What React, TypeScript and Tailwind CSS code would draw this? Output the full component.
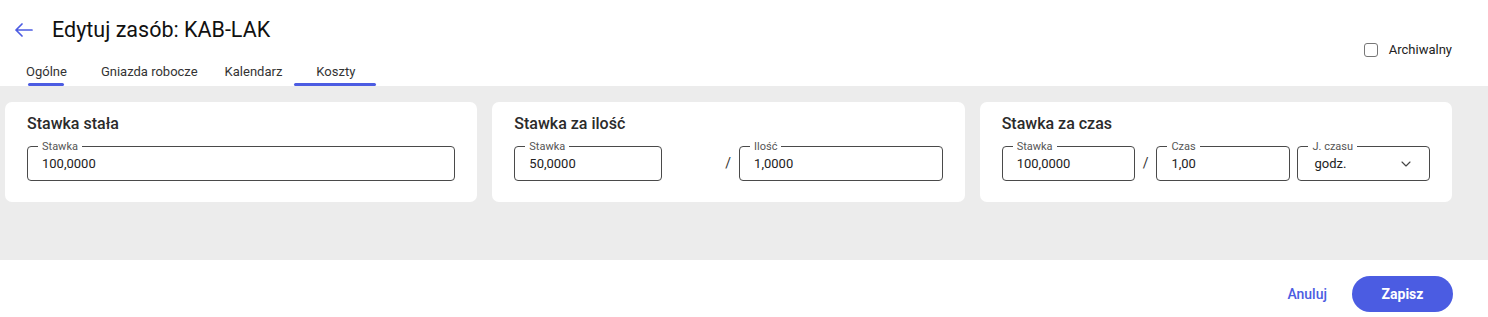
import { ChevronDown } from 'lucide-react';

const font = { fontFamily: 'Roboto, "Noto Sans", sans-serif' };

function Field({ label, value, className = '', select = false }: { label: string; value: string; className?: string; select?: boolean }) {
  return (
    <div className={`relative h-[35px] rounded-[4px] border border-[#4a4a4a] flex items-center ${select ? 'pl-[16px] pr-[15px]' : 'pl-[14px]'} ${className}`}>
      <span className="absolute -top-[7px] left-[10px] bg-white px-[4px] text-[11px] leading-[13px] text-[#555]">{label}</span>
      <span className="flex-1 text-[13px] text-[#222]">{value}</span>
      {select && <ChevronDown className="w-[16px] h-[16px] text-[#444]" strokeWidth={1.7} />}
    </div>
  );
}

function Card({ title, children }: { title: string; children: React.ReactNode }) {
  return (
    <div className="bg-white rounded-[7px] pt-[10px] px-[22px] pb-[21px]">
      <div className="text-[16px] leading-[24px] font-medium text-[#2b2b2b]">{title}</div>
      <div className="mt-[10px] flex items-center">{children}</div>
    </div>
  );
}

export default function App() {
  return (
    <div className="w-[1488px] h-[317px] bg-white flex flex-col" style={font}>
      <div className="h-[86px] flex justify-between">
        <div className="flex flex-col">
          <div className="mt-[14px] h-[32px] flex items-center pl-[15px]">
            <svg width="18" height="14" viewBox="0 0 18 14" fill="none" stroke="#4c5ce2" strokeWidth="1.7" strokeLinecap="round" strokeLinejoin="round">
              <path d="M7 1 L1 7 L7 13 M1 7 H17" />
            </svg>
            <h1 className="ml-[19px] text-[21.5px] text-[#111]">Edytuj zasób: KAB-LAK</h1>
          </div>
          <div className="mt-auto flex pl-[26px] text-[13px] leading-[16px] text-[#333]">
            <div className="relative pb-[6px]">
              Ogólne
              <span className="absolute bottom-0 left-[2px] right-[3px] h-[3px] rounded-full bg-[#4c5ce2]" />
            </div>
            <div className="ml-[34px] pb-[6px]">Gniazda robocze</div>
            <div className="ml-[27px] pb-[6px]">Kalendarz</div>
            <div className="relative ml-[34px] pb-[6px]">
              Koszty
              <span className="absolute bottom-0 -left-[22px] -right-[21px] h-[3px] rounded-full bg-[#4c5ce2]" />
            </div>
          </div>
        </div>
        <div className="pt-[43px] pr-[36px] flex items-start gap-[11px]">
          <span className="w-[14px] h-[14px] rounded-[3px] border-[1.5px] border-[#777] bg-white" />
          <span className="text-[13px] leading-[14px] text-[#222]">Archiwalny</span>
        </div>
      </div>

      <div className="h-[174px] bg-[#ececec] pt-[16px] pl-[5px] pr-[36px]">
        <div className="grid grid-cols-3 gap-[15px]">
          <Card title="Stawka stała">
            <Field label="Stawka" value="100,0000" className="flex-1" />
          </Card>
          <Card title="Stawka za ilość">
            <Field label="Stawka" value="50,0000" className="w-[148px]" />
            <span className="ml-[63px] mr-[8px] text-[14px] text-[#333]">/</span>
            <Field label="Ilość" value="1,0000" className="flex-1" />
          </Card>
          <Card title="Stawka za czas">
            <Field label="Stawka" value="100,0000" className="w-[133px]" />
            <span className="mx-[8px] text-[14px] text-[#333]">/</span>
            <Field label="Czas" value="1,00" className="w-[134px]" />
            <Field label="J. czasu" value="godz." className="ml-[7px] flex-1" select />
          </Card>
        </div>
      </div>

      <div className="flex-1 flex justify-end items-start pt-[16px] pr-[35px] gap-[25px]">
        <button className="h-[36px] text-[14px] font-medium text-[#4c5ce2]">Anuluj</button>
        <button className="w-[101px] h-[36px] rounded-full bg-[#4b5ce2] text-white text-[14px] font-bold">Zapisz</button>
      </div>
    </div>
  );
}
